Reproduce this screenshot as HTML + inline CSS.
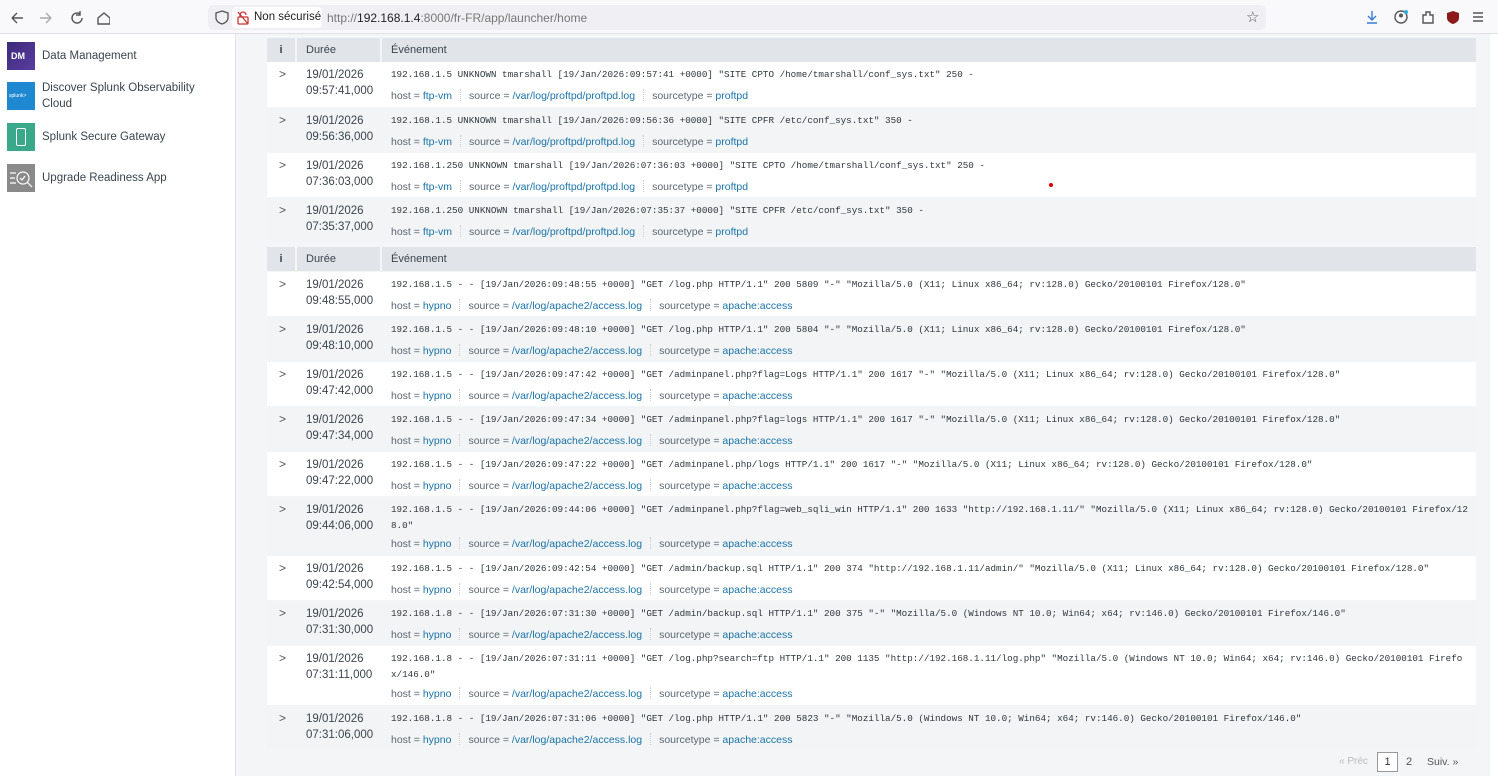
<!DOCTYPE html>
<html><head><meta charset="utf-8"><style>
*{margin:0;padding:0;box-sizing:border-box}
body{width:1498px;height:776px;overflow:hidden;background:#fff;font-family:"Liberation Sans",sans-serif;color:#333;position:relative}
.tb{position:absolute;left:0;top:0;width:1498px;height:34px;background:#f9f9fb;border-bottom:1px solid #e0e0e6}
.url{position:absolute;left:208px;top:5px;width:1058px;height:25px;background:#f0f0f4;border-radius:5px}
.ns{position:absolute;left:232px;top:7px;width:90px;height:21px;background:#fff;border-radius:4px;font-size:11.5px;color:#222;padding:4px 0 0 22px;white-space:nowrap}
.ut{position:absolute;left:327px;top:11px;font-size:12px;color:#777}
.ut b{color:#222;font-weight:normal}
.side{position:absolute;left:0;top:34px;width:236px;height:742px;border-right:1px solid #e3e3e3;background:#fff}
.app{position:absolute;left:7px;width:28px;height:28px}
.an{position:absolute;left:42px;font-size:11.5px;color:#3c444d;line-height:16px}
.main{position:absolute;left:236px;top:34px;width:1254px;height:742px;background:#f4f5f6}
.hdr{position:absolute;left:267px;width:1209px;height:24px;background:#e1e4e8;font-size:11px;color:#3c444d}
.hdr div{position:absolute;top:0;height:24px;line-height:24px;border-right:2px solid #f4f5f6}
.row{position:absolute;left:267px;width:1209px;background:#fff}
.row.g{background:#f2f4f5}
.chev{position:absolute;left:12px;top:5px;font-size:12px;color:#555}
.dt{position:absolute;left:39px;top:6px;font-size:11.5px;line-height:15.5px;color:#3c444d}
.ev{position:absolute;left:124px;top:5px;font-family:"Liberation Mono",monospace;font-size:9.25px;line-height:16px;color:#2f363d;white-space:pre}
.mt{position:absolute;left:124px;font-size:10.5px;color:#5c6773;white-space:nowrap}
.mt a{color:#1a73a8;text-decoration:none}
.mt .s{display:inline-block;width:1px;height:12px;border-left:1px dotted #ccc;margin:0 8px -2px 8px}
.pg{position:absolute;top:753px;font-size:11px;color:#555}
</style></head><body>
<div class="tb">
<svg style="position:absolute;left:10px;top:10px" width="100" height="16" viewBox="0 0 100 16" fill="none" stroke="#555" stroke-width="1.4">
<path d="M2 8h11M2 8l5-5M2 8l5 5"/><path d="M30 8h11M41 8l-5-5M41 8l-5 5" stroke="#aaa"/>
<path d="M70 4a5 5 0 1 0 2 4M70 1v4h-4" /><path d="M88 8l6-5 6 5v6h-12z"/></svg>
<div class="url"></div>
<svg style="position:absolute;left:215px;top:10px" width="14" height="15" viewBox="0 0 14 15" fill="none" stroke="#555" stroke-width="1.3"><path d="M7 1l6 2v5c0 3-3 5-6 6-3-1-6-3-6-6V3z"/></svg>
<div class="ns">Non sécurisé</div>
<svg style="position:absolute;left:237px;top:11px" width="12" height="14" viewBox="0 0 12 14" fill="none" stroke="#c33" stroke-width="1.3"><rect x="1" y="6" width="10" height="7" rx="1"/><path d="M3 6V4a3 3 0 0 1 6 0"/><path d="M1 1l10 12"/></svg>
<div class="ut">http://<b>192.168.1.4</b>:8000/fr-FR/app/launcher/home</div>
<div style="position:absolute;left:1246px;top:8px;font-size:15px;color:#555">☆</div>
<svg style="position:absolute;left:1365px;top:9px" width="120" height="16" viewBox="0 0 120 16" fill="none" stroke-width="1.4">
<path d="M7 2v9M3 7l4 4 4-4M2 14h10" stroke="#3a7bd5"/>
<circle cx="36" cy="8" r="6" stroke="#555"/><circle cx="36" cy="6.5" r="2" fill="#555"/><circle cx="41" cy="3" r="2" fill="#2bb0d9" stroke="none"/>
<path d="M58 14V6h3V3h4v3h3v8z" stroke="#555"/>
<path d="M88 2l6 2v5c0 3-3 5-6 6-3-1-6-3-6-6V4z" fill="#8b1a1a" stroke="none"/>
<path d="M108 4h10M108 8h10M108 12h10" stroke="#555"/></svg>
</div>
<div class="side">
<div class="app" style="top:8px;background:linear-gradient(135deg,#3b2a7a,#5a3da0);color:#fff;font-size:9px;font-weight:bold;padding:9px 0 0 4px">DM</div>
<div class="an" style="top:14px">Data Management</div>
<div class="app" style="top:48px;background:#1e88d0;color:#fff;font-size:5px;padding:11px 0 0 2px">splunk&gt;</div>
<div class="an" style="top:46px">Discover Splunk Observability<br>Cloud</div>
<div class="app" style="top:89px;background:#3aa88a"><div style="position:absolute;left:9px;top:5px;width:10px;height:18px;border:1.5px solid #fff;border-radius:2px"></div></div>
<div class="an" style="top:95px">Splunk Secure Gateway</div>
<div class="app" style="top:130px;background:#8a8a8a"><svg width="28" height="28" viewBox="0 0 28 28" fill="none" stroke="#fff" stroke-width="1.2"><path d="M3 9h6M3 14h5M3 19h6"/><circle cx="16" cy="14" r="6"/><path d="M20 18l5 5M13 14l2 2 3-4"/></svg></div>
<div class="an" style="top:136px">Upgrade Readiness App</div>
</div>
<div class="main"></div>
<div style="position:absolute;left:1490px;top:34px;width:8px;height:742px;background:#fff"></div>

<div class="hdr" style="top:38px"><div style="left:0;width:30px;text-align:center;font-weight:bold">i</div><div style="left:30px;width:85px;padding-left:9px">Durée</div><div style="left:115px;border:none;padding-left:9px">Événement</div></div>
<div class="hdr" style="top:247px"><div style="left:0;width:30px;text-align:center;font-weight:bold">i</div><div style="left:30px;width:85px;padding-left:9px">Durée</div><div style="left:115px;border:none;padding-left:9px">Événement</div></div>

<div class="row" style="top:62px;height:45px"><div class="chev">&gt;</div><div class="dt">19/01/2026<br>09:57:41,000</div><div class="ev">192.168.1.5 UNKNOWN tmarshall [19/Jan/2026:09:57:41 +0000] "SITE CPTO /home/tmarshall/conf_sys.txt" 250 -</div><div class="mt" style="top:27px">host = <a>ftp-vm</a><span class="s"></span>source = <a>/var/log/proftpd/proftpd.log</a><span class="s"></span>sourcetype = <a>proftpd</a></div></div>
<div class="row g" style="top:108px;height:44px"><div class="chev">&gt;</div><div class="dt">19/01/2026<br>09:56:36,000</div><div class="ev">192.168.1.5 UNKNOWN tmarshall [19/Jan/2026:09:56:36 +0000] "SITE CPFR /etc/conf_sys.txt" 350 -</div><div class="mt" style="top:27px">host = <a>ftp-vm</a><span class="s"></span>source = <a>/var/log/proftpd/proftpd.log</a><span class="s"></span>sourcetype = <a>proftpd</a></div></div>
<div class="row" style="top:153px;height:44px"><div class="chev">&gt;</div><div class="dt">19/01/2026<br>07:36:03,000</div><div class="ev">192.168.1.250 UNKNOWN tmarshall [19/Jan/2026:07:36:03 +0000] "SITE CPTO /home/tmarshall/conf_sys.txt" 250 -</div><div class="mt" style="top:27px">host = <a>ftp-vm</a><span class="s"></span>source = <a>/var/log/proftpd/proftpd.log</a><span class="s"></span>sourcetype = <a>proftpd</a></div><div style="position:absolute;left:782px;top:30px;width:4px;height:4px;border-radius:2px;background:#d00"></div></div>
<div class="row g" style="top:198px;height:44px"><div class="chev">&gt;</div><div class="dt">19/01/2026<br>07:35:37,000</div><div class="ev">192.168.1.250 UNKNOWN tmarshall [19/Jan/2026:07:35:37 +0000] "SITE CPFR /etc/conf_sys.txt" 350 -</div><div class="mt" style="top:27px">host = <a>ftp-vm</a><span class="s"></span>source = <a>/var/log/proftpd/proftpd.log</a><span class="s"></span>sourcetype = <a>proftpd</a></div></div>

<div class="row" style="top:272px;height:44px"><div class="chev">&gt;</div><div class="dt">19/01/2026<br>09:48:55,000</div><div class="ev">192.168.1.5 - - [19/Jan/2026:09:48:55 +0000] "GET /log.php HTTP/1.1" 200 5809 "-" "Mozilla/5.0 (X11; Linux x86_64; rv:128.0) Gecko/20100101 Firefox/128.0"</div><div class="mt" style="top:27px">host = <a>hypno</a><span class="s"></span>source = <a>/var/log/apache2/access.log</a><span class="s"></span>sourcetype = <a>apache:access</a></div></div>
<div class="row g" style="top:317px;height:44px"><div class="chev">&gt;</div><div class="dt">19/01/2026<br>09:48:10,000</div><div class="ev">192.168.1.5 - - [19/Jan/2026:09:48:10 +0000] "GET /log.php HTTP/1.1" 200 5804 "-" "Mozilla/5.0 (X11; Linux x86_64; rv:128.0) Gecko/20100101 Firefox/128.0"</div><div class="mt" style="top:27px">host = <a>hypno</a><span class="s"></span>source = <a>/var/log/apache2/access.log</a><span class="s"></span>sourcetype = <a>apache:access</a></div></div>
<div class="row" style="top:362px;height:44px"><div class="chev">&gt;</div><div class="dt">19/01/2026<br>09:47:42,000</div><div class="ev">192.168.1.5 - - [19/Jan/2026:09:47:42 +0000] "GET /adminpanel.php?flag=Logs HTTP/1.1" 200 1617 "-" "Mozilla/5.0 (X11; Linux x86_64; rv:128.0) Gecko/20100101 Firefox/128.0"</div><div class="mt" style="top:27px">host = <a>hypno</a><span class="s"></span>source = <a>/var/log/apache2/access.log</a><span class="s"></span>sourcetype = <a>apache:access</a></div></div>
<div class="row g" style="top:407px;height:44px"><div class="chev">&gt;</div><div class="dt">19/01/2026<br>09:47:34,000</div><div class="ev">192.168.1.5 - - [19/Jan/2026:09:47:34 +0000] "GET /adminpanel.php?flag=logs HTTP/1.1" 200 1617 "-" "Mozilla/5.0 (X11; Linux x86_64; rv:128.0) Gecko/20100101 Firefox/128.0"</div><div class="mt" style="top:27px">host = <a>hypno</a><span class="s"></span>source = <a>/var/log/apache2/access.log</a><span class="s"></span>sourcetype = <a>apache:access</a></div></div>
<div class="row" style="top:452px;height:44px"><div class="chev">&gt;</div><div class="dt">19/01/2026<br>09:47:22,000</div><div class="ev">192.168.1.5 - - [19/Jan/2026:09:47:22 +0000] "GET /adminpanel.php/logs HTTP/1.1" 200 1617 "-" "Mozilla/5.0 (X11; Linux x86_64; rv:128.0) Gecko/20100101 Firefox/128.0"</div><div class="mt" style="top:27px">host = <a>hypno</a><span class="s"></span>source = <a>/var/log/apache2/access.log</a><span class="s"></span>sourcetype = <a>apache:access</a></div></div>
<div class="row g" style="top:497px;height:58px"><div class="chev">&gt;</div><div class="dt">19/01/2026<br>09:44:06,000</div><div class="ev">192.168.1.5 - - [19/Jan/2026:09:44:06 +0000] "GET /adminpanel.php?flag=web_sqli_win HTTP/1.1" 200 1633 "http://192.168.1.11/" "Mozilla/5.0 (X11; Linux x86_64; rv:128.0) Gecko/20100101 Firefox/12
8.0"</div><div class="mt" style="top:40px">host = <a>hypno</a><span class="s"></span>source = <a>/var/log/apache2/access.log</a><span class="s"></span>sourcetype = <a>apache:access</a></div></div>
<div class="row" style="top:556px;height:44px"><div class="chev">&gt;</div><div class="dt">19/01/2026<br>09:42:54,000</div><div class="ev">192.168.1.5 - - [19/Jan/2026:09:42:54 +0000] "GET /admin/backup.sql HTTP/1.1" 200 374 "http://192.168.1.11/admin/" "Mozilla/5.0 (X11; Linux x86_64; rv:128.0) Gecko/20100101 Firefox/128.0"</div><div class="mt" style="top:27px">host = <a>hypno</a><span class="s"></span>source = <a>/var/log/apache2/access.log</a><span class="s"></span>sourcetype = <a>apache:access</a></div></div>
<div class="row g" style="top:601px;height:44px"><div class="chev">&gt;</div><div class="dt">19/01/2026<br>07:31:30,000</div><div class="ev">192.168.1.8 - - [19/Jan/2026:07:31:30 +0000] "GET /admin/backup.sql HTTP/1.1" 200 375 "-" "Mozilla/5.0 (Windows NT 10.0; Win64; x64; rv:146.0) Gecko/20100101 Firefox/146.0"</div><div class="mt" style="top:27px">host = <a>hypno</a><span class="s"></span>source = <a>/var/log/apache2/access.log</a><span class="s"></span>sourcetype = <a>apache:access</a></div></div>
<div class="row" style="top:646px;height:59px"><div class="chev">&gt;</div><div class="dt">19/01/2026<br>07:31:11,000</div><div class="ev">192.168.1.8 - - [19/Jan/2026:07:31:11 +0000] "GET /log.php?search=ftp HTTP/1.1" 200 1135 "http://192.168.1.11/log.php" "Mozilla/5.0 (Windows NT 10.0; Win64; x64; rv:146.0) Gecko/20100101 Firefo
x/146.0"</div><div class="mt" style="top:41px">host = <a>hypno</a><span class="s"></span>source = <a>/var/log/apache2/access.log</a><span class="s"></span>sourcetype = <a>apache:access</a></div></div>
<div class="row g" style="top:706px;height:44px"><div class="chev">&gt;</div><div class="dt">19/01/2026<br>07:31:06,000</div><div class="ev">192.168.1.8 - - [19/Jan/2026:07:31:06 +0000] "GET /log.php HTTP/1.1" 200 5823 "-" "Mozilla/5.0 (Windows NT 10.0; Win64; x64; rv:146.0) Gecko/20100101 Firefox/146.0"</div><div class="mt" style="top:27px">host = <a>hypno</a><span class="s"></span>source = <a>/var/log/apache2/access.log</a><span class="s"></span>sourcetype = <a>apache:access</a></div></div>

<div class="pg" style="left:1339px;color:#bbb;font-size:10px;top:756px">« Préc</div>
<div style="position:absolute;left:1377px;top:752px;width:21px;height:20px;border:1px solid #999;background:#fff;font-size:11px;text-align:center;line-height:18px;color:#333">1</div>
<div class="pg" style="left:1406px;top:756px">2</div>
<div class="pg" style="left:1427px;top:756px;font-size:10.5px">Suiv. »</div>
</body></html>
